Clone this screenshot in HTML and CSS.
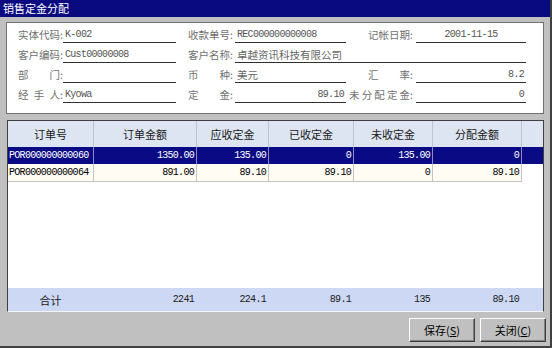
FILE: index.html
```html
<!DOCTYPE html>
<html>
<head>
<meta charset="utf-8">
<link rel="stylesheet" href="styles.css">
</head>
<body>
<div class="window">
  <div class="titlebar">销售定金分配</div>
  <div class="panel">
    <div class="form">
      <div class="lbl c1"><span class="t">实体代码</span>:</div>
      <div class="fld c2 mono">K-002</div>
      <div class="lbl c4"><span class="t">收款单号</span>:</div>
      <div class="fld c5 mono">REC000000000008</div>
      <div class="lbl c6 r"><span class="t">记帐日期</span>:</div>
      <div class="fld c7 mono center">2001-11-15</div>

      <div class="lbl c1"><span class="t">客户编码</span>:</div>
      <div class="fld c2 mono">Cust00000008</div>
      <div class="lbl c4"><span class="t">客户名称</span>:</div>
      <div class="fld c5w cn">卓越资讯科技有限公司</div>

      <div class="lbl c1"><span class="t">部门</span>:</div>
      <div class="fld c2"></div>
      <div class="lbl c4"><span class="t">币种</span>:</div>
      <div class="fld c5 cn">美元</div>
      <div class="lbl c6 r"><span class="t">汇率</span>:</div>
      <div class="fld c7 mono right">8.2</div>

      <div class="lbl c1"><span class="t">经手人</span>:</div>
      <div class="fld c2 mono">Kyowa</div>
      <div class="lbl c4"><span class="t">定金</span>:</div>
      <div class="fld c5 mono right">89.10</div>
      <div class="lbl c6 r"><span class="t wide">未分配定金</span>:</div>
      <div class="fld c7 mono right">0</div>
    </div>
  </div>

  <div class="grid">
    <div class="row head">
      <div class="cell">订单号</div>
      <div class="cell">订单金额</div>
      <div class="cell">应收定金</div>
      <div class="cell">已收定金</div>
      <div class="cell">未收定金</div>
      <div class="cell">分配金额</div>
      <div class="cell last"></div>
    </div>
    <div class="row data sel">
      <div class="cell txt">POR000000000060</div>
      <div class="cell num">1350.00</div>
      <div class="cell num">135.00</div>
      <div class="cell num">0</div>
      <div class="cell num">135.00</div>
      <div class="cell num">0</div>
      <div class="cell last"></div>
    </div>
    <div class="row data plain">
      <div class="cell txt">POR000000000064</div>
      <div class="cell num">891.00</div>
      <div class="cell num">89.10</div>
      <div class="cell num">89.10</div>
      <div class="cell num">0</div>
      <div class="cell num">89.10</div>
      <div class="cell last"></div>
    </div>
    <div class="spacer"></div>
    <div class="row foot">
      <div class="cell ctr">合计</div>
      <div class="cell num">2241</div>
      <div class="cell num">224.1</div>
      <div class="cell num">89.1</div>
      <div class="cell num">135</div>
      <div class="cell num">89.10</div>
      <div class="cell last"></div>
    </div>
  </div>

  <div class="buttons">
    <button class="btn">保存(<u>S</u>)</button>
    <button class="btn">关闭(<u>C</u>)</button>
  </div>
</div>
</body>
</html>
```

FILE: styles.css
```css
* { box-sizing: border-box; }
html, body { margin: 0; padding: 0; }
body {
  width: 552px;
  height: 348px;
  overflow: hidden;
  background: #c0c0c0;
  font-family: "Noto Sans CJK SC", "Liberation Sans", sans-serif;
}
.window {
  width: 552px;
  height: 348px;
  background: #c0c0c0;
  border-right: 2px solid #404040;
  border-bottom: 2px solid #404040;
  display: flex;
  flex-direction: column;
}
.titlebar {
  height: 17px;
  background: #0a0a80;
  color: #fff;
  font-size: 11px;
  line-height: 17px;
  padding-left: 3px;
}
.panel {
  margin: 5px 0 0 6px;
  width: 538px;
  height: 92px;
  background: #fff;
  border: 1px solid #707070;
  padding: 3px 0 0 11px;
}
.form {
  display: grid;
  grid-template-columns: 45px 113px 12px 47px 111px 70px 110px;
  grid-auto-rows: 17px;
  row-gap: 3px;
}
.c1 { grid-column: 1; }
.c2 { grid-column: 2; }
.c4 { grid-column: 4; }
.c5 { grid-column: 5; }
.c5w { grid-column: 5 / 8; }
.c6 { grid-column: 6; }
.c7 { grid-column: 7; }
.lbl {
  display: flex;
  align-items: center;
  font-size: 10.5px;
  color: #707070;
  white-space: nowrap;
}
.lbl.r { justify-content: flex-end; padding-right: 3px; }
.lbl .t {
  display: inline-block;
  width: 42px;
  text-align: justify;
  text-align-last: justify;
}
.lbl .t.wide { width: 61px; }
.fld {
  border-bottom: 1px solid #303030;
  display: flex;
  align-items: center;
  padding: 0 2px;
  color: #555;
  white-space: nowrap;
  overflow: hidden;
}
.mono {
  font-family: "Liberation Mono", monospace;
  font-size: 10px;
  letter-spacing: -0.7px;
}
.cn { font-size: 10.5px; color: #666; }
.center { justify-content: center; }
.right { justify-content: flex-end; }

.grid {
  margin: 6px 0 0 7px;
  width: 537px;
  height: 192px;
  background: #fff;
  border-top: 1px solid #404040;
  border-left: 1px solid #404040;
  border-right: 1px solid #404040;
  border-bottom: 1px solid #f4f4f4;
  display: flex;
  flex-direction: column;
}
.row {
  display: grid;
  grid-template-columns: 86px 103px 72px 85px 79px 89px 1fr;
}
.cell {
  border-right: 1px solid transparent;
  white-space: nowrap;
  overflow: hidden;
  display: flex;
  align-items: center;
}
.cell.last { border-right: none; }
.head { height: 26px; background: #dee5f2; }
.head .cell {
  justify-content: center;
  font-size: 11px;
  color: #202020;
  border-right-color: #bcc4d4;
}
.head .cell.last { border-right: none; }
.data .cell {
  font-family: "Liberation Mono", monospace;
  font-size: 10px;
  letter-spacing: -0.7px;
}
.sel { height: 17px; background: #0a0a84; color: #fff; }
.sel .cell { border-right-color: #8a8ac4; }
.sel .cell.last { border-right: none; }
.plain { height: 18px; color: #000; }
.plain .cell {
  background: #fffcf4;
  border-right-color: #c4c4c4;
  border-bottom: 1px solid #c4c4c4;
}
.plain .cell.last { background: #fff; border: none; }
.txt { padding-left: 1px; }
.num { justify-content: flex-end; padding-right: 2px; }
.spacer { flex: 1; }
.foot {
  height: 23px;
  background: #cdd8f4;
  color: #202020;
}
.foot .cell.ctr { justify-content: center; font-size: 11px; }
.foot .num {
  font-family: "Liberation Mono", monospace;
  font-size: 10px;
  letter-spacing: -0.7px;
}
.buttons {
  display: flex;
  justify-content: flex-end;
  gap: 5px;
  padding: 6px 4px 0 0;
}
.btn {
  width: 66px;
  height: 24px;
  margin: 0;
  padding: 0;
  background: #c0c0c0;
  font-family: "Noto Sans CJK SC", "Liberation Sans", sans-serif;
  font-size: 11px;
  color: #000;
  border-top: 1px solid #ffffff;
  border-left: 1px solid #ffffff;
  border-right: 1px solid #404040;
  border-bottom: 1px solid #404040;
  box-shadow: inset -1px -1px 0 #808080;
}
.btn u { text-decoration: underline; }
```
